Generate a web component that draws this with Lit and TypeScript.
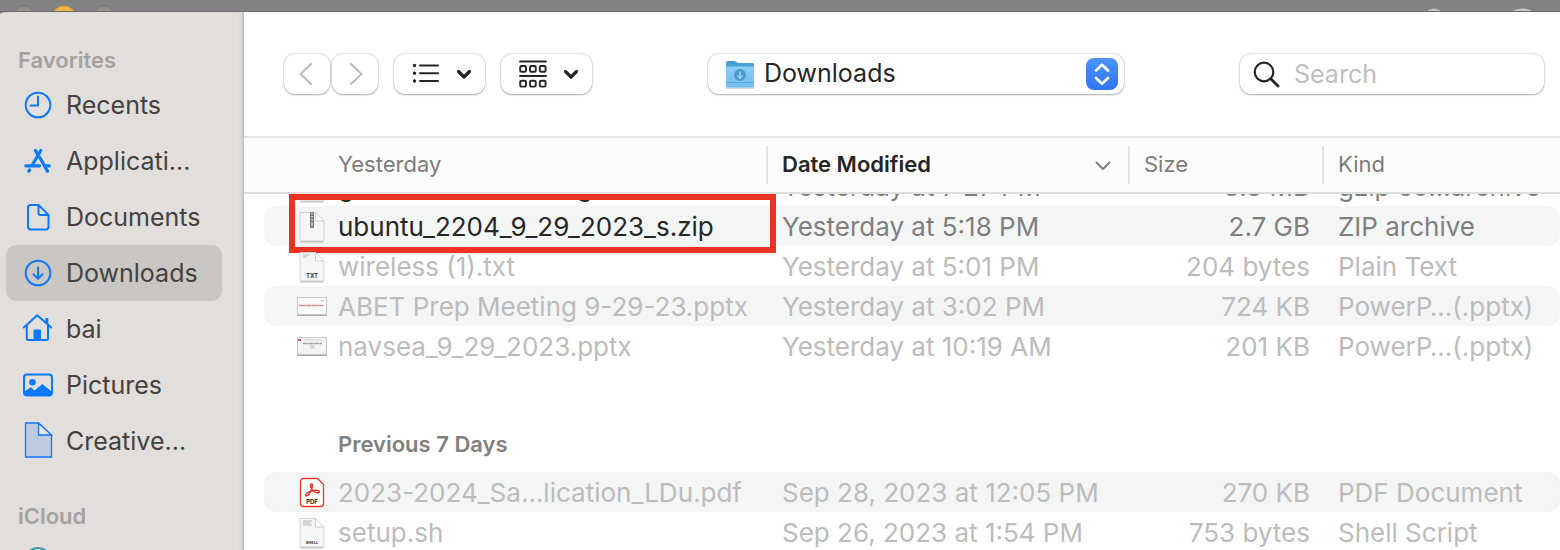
import { LitElement, html, css, svg } from "lit";
import { customElement, property, query } from "lit/decorators.js";
import { classMap } from "lit/directives/class-map.js";

interface FileRow {
  name: string;
  date: string;
  size: string;
  kind: string;
  icon: string;
  enabled?: boolean;
  shaded?: boolean;
  marked?: boolean;
}

const yesterday: FileRow[] = [
  { name: "gtkwave_2.2.117.tar.gz", date: "Yesterday at 7:27 PM", size: "3.3 MB", kind: "gzip co…archive", icon: "zip", enabled: true },
  { name: "ubuntu_2204_9_29_2023_s.zip", date: "Yesterday at 5:18 PM", size: "2.7 GB", kind: "ZIP archive", icon: "zip", enabled: true, shaded: true, marked: true },
  { name: "wireless (1).txt", date: "Yesterday at 5:01 PM", size: "204 bytes", kind: "Plain Text", icon: "txt" },
  { name: "ABET Prep Meeting 9-29-23.pptx", date: "Yesterday at 3:02 PM", size: "724 KB", kind: "PowerP…(.pptx)", icon: "slideRed", shaded: true },
  { name: "navsea_9_29_2023.pptx", date: "Yesterday at 10:19 AM", size: "201 KB", kind: "PowerP…(.pptx)", icon: "slide" },
];

const previousWeek: FileRow[] = [
  { name: "2023-2024_Sa...lication_LDu.pdf", date: "Sep 28, 2023 at 12:05 PM", size: "270 KB", kind: "PDF Document", icon: "pdf", shaded: true },
  { name: "setup.sh", date: "Sep 26, 2023 at 1:54 PM", size: "753 bytes", kind: "Shell Script", icon: "shell" },
];

const page = svg`
  <path d="M4.500 3H19l8 8v20H4.500z" fill="#000" opacity=".25" transform="translate(0 1.500)"/>
  <path d="M4 2.500H19.500L28 11V31H4z" fill="#f6f6f6" stroke="#d2d2d2" stroke-width="1"/>
  <path d="M19.500 2.500V11H28z" fill="#fff" stroke="#cfcfcf" stroke-width="1"/>`;

const fileIcons: Record<string, unknown> = {
  zip: svg`${page}
    <rect x="14" y="2" width="4" height="16" rx="1" fill="#6c7278"/>
    <path d="M16 3v10" stroke="#c4c8cc" stroke-width="2" stroke-dasharray="1.500 1.500"/>
    <rect x="15" y="13" width="2" height="4" fill="#aeb2b6"/>`,
  txt: svg`${page}
    <path d="M7 5h7M7 7h4" stroke="#bbb" stroke-width="1"/>
    <text x="16" y="28" class="tag">TXT</text>`,
  shell: svg`${page}
    <path d="M7 5h9M7 7h8M7 9h9" stroke="#b5b5b5" stroke-width="1"/>
    <text x="16" y="28" class="tag small">SHELL</text>`,
  slideRed: svg`
    <rect x="1" y="9" width="30" height="17" rx="1" fill="#a9a9a9"/>
    <rect x="1.500" y="7.500" width="29" height="17" fill="#fbfbfb" stroke="#c6c6c6" stroke-width="1"/>
    <path d="M3 15.500h24" stroke="#dd8a93" stroke-width="1.600" stroke-dasharray="6 .5"/>
    <path d="M25 10.500h3" stroke="#bbb" stroke-width="1"/>`,
  slide: svg`
    <rect x="1" y="9" width="30" height="17" rx="1" fill="#a9a9a9"/>
    <rect x="1.500" y="7.500" width="29" height="17" fill="#f4f4f4" stroke="#c6c6c6" stroke-width="1"/>
    <rect x="2" y="9" width="3" height="2" fill="#c0506a"/>
    <path d="M8 10h18" stroke="#cfcfcf" stroke-width="1"/>
    <path d="M7 13.500h19" stroke="#a4a4a4" stroke-width="1.500" stroke-dasharray="5 .5"/>
    <path d="M14 16h5M15 18h3" stroke="#b4b4b4" stroke-width="1"/>`,
  pdf: svg`
    <path d="M7 2.500H21.500L27.500 8.500V27.500a3 3 0 0 1-3 3H7.500a3 3 0 0 1-3-3V5.500a3 3 0 0 1 3-3z" fill="#fff" stroke="#e8382b" stroke-width="1.300"/>
    <path d="M15.500 8c-1.800 0-1.300 3.200 1.200 6.200 2 2.500 6.800 3.600 6.800 1.600 0-2.200-6.500-1.700-10 0-3.800 1.700-4.500 3.700-3.200 4 1.800.4 4-3.300 5.200-6.500C16.300 11 17 8 15.500 8z" fill="none" stroke="#e8382b" stroke-width="1.500"/>
    <text x="16" y="28" class="tag pdf">PDF</text>`,
};

const sideIcons: Record<string, unknown> = {
  recents: svg`<circle cx="16" cy="16" r="12.300" class="line"/><path d="M16 7.500V16.500H8.500" class="line"/>`,
  applications: svg`
    <path d="M13.300 5.500L15.500 8.800M18.900 5.500L10.500 19.500M6.800 26.200L7.600 25" class="bold"/>
    <path d="M3.800 20.800H17.500M23 20.800H27.300" class="bold"/>
    <path d="M17.800 12.500L25.500 26.200" class="bold"/>`,
  documents: svg`
    <path d="M8 4H16.500L26.500 14V26a2.500 2.500 0 0 1-2.500 2.500H8.500A2.500 2.500 0 0 1 6 26V6.500A2.500 2.500 0 0 1 8.500 4" class="line"/>
    <path d="M16.500 4V12.500a1.500 1.500 0 0 0 1.500 1.500h8.500" class="line"/>`,
  downloads: svg`<circle cx="16" cy="16" r="12.300" class="line"/><path d="M16 10.500V21.500M11.500 17.300L16 21.700L20.500 17.300" class="line"/>`,
  home: svg`
    <path d="M1.800 14.500L15.200 2.300L29.200 14.500" class="line"/>
    <path d="M4.800 12.500V25.500a1.500 1.500 0 0 0 1.500 1.500H24.500a1.500 1.500 0 0 0 1.500-1.500V12.500" class="line"/>
    <path d="M23.500 5H26.300V12L23.500 9.500z" class="fill"/>
    <path d="M11.500 16.500H19V27H11.500z" class="fill"/>`,
  pictures: svg`
    <rect x="2" y="5.500" width="28" height="21" rx="3" class="line"/>
    <circle cx="10.500" cy="13.300" r="3.300" class="fill"/>
    <path d="M2.500 22.500L8.700 18.300L12.500 21.500L20.300 15L29.500 22.500V25a2 2 0 0 1-2 2H4.500a2 2 0 0 1-2-2z" class="fill"/>`,
  folderDoc: svg`
    <path d="M3.500-2H16.500L29.500 10.500V32H3.500z" fill="#bfcce0" stroke="#0a78ff" stroke-width="1.300"/>
    <path d="M16.500-2V10H29.500z" fill="#e6e5e8" stroke="#0a78ff" stroke-width="1.300"/>`,
  cloud: svg`<circle cx="16" cy="16" r="13" fill="none" stroke="#3e8fa5" stroke-width="2"/>`,
};

const chevron = svg`<path d="M2.500 2.500L8 8L13.500 2.500" fill="none" stroke="#262626" stroke-width="3.200" stroke-linecap="round" stroke-linejoin="round"/>`;

@customElement("finder-sidebar")
class FinderSidebar extends LitElement {
  static styles = css`
    :host {
      display: block;
      width: 244px;
      flex: none;
      box-sizing: border-box;
      padding: 34px 22px 0 6px;
      overflow: hidden;
      background: linear-gradient(to left, #c2bfbc 0 1px, #d9d6d3 2px, #e2dedb 6px);
      border-top-left-radius: 10px 2px;
      color: #434241;
    }
    .heading {
      margin: 0;
      padding-left: 12px;
      font-size: 22px;
      line-height: 28px;
      font-weight: 600;
      color: #a5a19f;
    }
    .items {
      list-style: none;
      margin: 3px 0 33px;
      padding: 0;
    }
    .item {
      display: flex;
      align-items: center;
      gap: 12px;
      height: 56px;
      padding: 0 16px;
      border-radius: 10px;
      color: inherit;
      text-decoration: none;
      font-size: 25px;
    }
    .item.selected {
      background: #cac6c3;
    }
    .icon {
      width: 32px;
      height: 32px;
      flex: none;
      overflow: visible;
    }
    .line {
      fill: none;
      stroke: #0a78ff;
      stroke-width: 2;
      stroke-linecap: round;
      stroke-linejoin: round;
    }
    .bold {
      fill: none;
      stroke: #0a78ff;
      stroke-width: 3.200;
      stroke-linecap: round;
    }
    .fill {
      fill: #0a78ff;
    }
  `;

  private favorites = [
    ["recents", "Recents"],
    ["applications", "Applicati..."],
    ["documents", "Documents"],
    ["downloads", "Downloads"],
    ["home", "bai"],
    ["pictures", "Pictures"],
    ["folderDoc", "Creative..."],
  ];

  render() {
    return html`
      <nav>
        <h2 class="heading">Favorites</h2>
        <ul class="items">
          ${this.favorites.map(
            ([icon, label]) => html`<li>
              <a href="#${icon}" class=${classMap({ item: true, selected: icon === "downloads" })}>
                <svg class="icon" viewBox="0 0 32 32" aria-hidden="true">${sideIcons[icon]}</svg>
                <span>${label}</span>
              </a>
            </li>`
          )}
        </ul>
        <h2 class="heading">iCloud</h2>
        <ul class="items">
          <li>
            <a href="#icloud" class="item" aria-label="iCloud">
              <svg class="icon" viewBox="0 0 32 32" aria-hidden="true">${sideIcons.cloud}</svg>
            </a>
          </li>
        </ul>
      </nav>
    `;
  }
}

@customElement("finder-toolbar")
class FinderToolbar extends LitElement {
  static styles = css`
    :host {
      display: flex;
      justify-content: space-between;
      align-items: center;
      height: 124px;
      flex: none;
      box-sizing: border-box;
      padding: 0 16px 0 40px;
    }
    .group {
      display: flex;
      gap: 16px;
    }
    .pair {
      display: flex;
      gap: 2px;
    }
    .control {
      box-sizing: border-box;
      height: 40px;
      border: 0;
      border-radius: 11px;
      background: #fff;
      box-shadow: 0 0 2px rgba(0, 0, 0, 0.3), 0 1px 2px rgba(0, 0, 0, 0.25);
      padding: 0;
      display: flex;
      align-items: center;
      justify-content: center;
    }
    .nav {
      width: 46px;
    }
    .menu {
      width: 91px;
      gap: 16px;
      padding-left: 5px;
    }
    .place {
      position: relative;
      width: 416px;
    }
    .folder {
      position: absolute;
      left: 16px;
      top: 5px;
      pointer-events: none;
    }
    .stepper {
      position: absolute;
      right: 6px;
      top: 4px;
      pointer-events: none;
    }
    .select {
      appearance: none;
      width: 100%;
      height: 40px;
      border: 0;
      border-radius: 11px;
      background: transparent;
      padding: 0 40px 2px 56px;
      font: inherit;
      font-size: 25px;
      color: #262626;
    }
    .search {
      width: 304px;
      justify-content: flex-start;
      padding: 0 13px;
      gap: 14px;
    }
    .input {
      flex: 1;
      min-width: 0;
      border: 0;
      outline: 0;
      padding: 0;
      background: transparent;
      font: inherit;
      font-size: 25px;
      color: #262626;
    }
    .input::placeholder {
      color: #bfbfbf;
      opacity: 1;
    }
  `;

  render() {
    return html`
      <div class="group">
        <div class="pair">
          <button class="control nav" aria-label="Back">
            <svg width="16" height="24" viewBox="0 0 16 24"><path d="M12 2L1.500 12L12 22" fill="none" stroke="#bdbdbd" stroke-width="2.200" stroke-linecap="round" stroke-linejoin="round"/></svg>
          </button>
          <button class="control nav" aria-label="Forward">
            <svg width="16" height="24" viewBox="0 0 16 24"><path d="M4 2L14.500 12L4 22" fill="none" stroke="#bdbdbd" stroke-width="2.200" stroke-linecap="round" stroke-linejoin="round"/></svg>
          </button>
        </div>
        <button class="control menu" aria-label="List view">
          <svg width="28" height="28" viewBox="0 0 28 28">
            <g stroke="#262626" stroke-width="2" stroke-linecap="round">
              <path d="M8 5.500H26M8 13.200H26M8 21H26"/>
              <path d="M2.500 5.500h.01M2.500 13.200h.01M2.500 21h.01" stroke-width="3.400"/>
            </g>
          </svg>
          <svg width="16" height="11" viewBox="0 0 16 11">${chevron}</svg>
        </button>
        <button class="control menu" aria-label="Group items">
          <svg width="28" height="28" viewBox="0 0 28 28">
            <g fill="none" stroke="#262626" stroke-width="1.900" stroke-linecap="round">
              <path d="M1 1.500H27M1 16H27"/>
              <rect x="1.200" y="6" width="5.800" height="5.800" rx="1.300"/>
              <rect x="11" y="6" width="5.800" height="5.800" rx="1.300"/>
              <rect x="20.800" y="6" width="5.800" height="5.800" rx="1.300"/>
              <rect x="1.200" y="20.800" width="5.800" height="5.800" rx="1.300"/>
              <rect x="11" y="20.800" width="5.800" height="5.800" rx="1.300"/>
              <rect x="20.800" y="20.800" width="5.800" height="5.800" rx="1.300"/>
            </g>
          </svg>
          <svg width="16" height="11" viewBox="0 0 16 11">${chevron}</svg>
        </button>
      </div>
      <div class="control place">
        <svg class="folder" width="32" height="32" viewBox="0 0 32 32" aria-hidden="true">
          <defs>
            <linearGradient id="front" x1="0" y1="0" x2="0" y2="1">
              <stop offset="0" stop-color="#8bcdf5"/><stop offset="1" stop-color="#70bdec"/>
            </linearGradient>
          </defs>
          <path d="M2 28.500H30V29.500H2z" fill="#9fb4c2"/>
          <path d="M2 4a2 2 0 0 1 2-2H10.500L14 4H28.500A1.500 1.500 0 0 1 30 5.500V10H2z" fill="#4a9fd3"/>
          <path d="M2 7.500H30V27a1.500 1.500 0 0 1-1.500 1.500H3.500A1.500 1.500 0 0 1 2 27z" fill="url(#front)"/>
          <path d="M2 23.500H30" stroke="#5aa9da" stroke-width="1"/>
          <circle cx="16" cy="16" r="6" fill="#4d9bcb"/>
          <path d="M16 12.500V19M13.300 16.500L16 19.200L18.700 16.500" fill="none" stroke="#8fd0f5" stroke-width="1.700"/>
        </svg>
        <select class="select" aria-label="Folder">
          <option>Downloads</option>
        </select>
        <svg class="stepper" width="32" height="32" viewBox="0 0 32 32" aria-hidden="true">
          <defs>
            <linearGradient id="blue" x1="0" y1="0" x2="0" y2="1">
              <stop offset="0" stop-color="#4c94fb"/><stop offset="1" stop-color="#2f75f5"/>
            </linearGradient>
          </defs>
          <rect width="32" height="32" rx="8" fill="url(#blue)"/>
          <path d="M10 12.500L16 6.700L22 12.500M10 20L16 25.800L22 20" fill="none" stroke="#fff" stroke-width="2.700" stroke-linecap="round" stroke-linejoin="round"/>
        </svg>
      </div>
      <label class="control search">
        <svg width="27" height="27" viewBox="0 0 27 27" aria-hidden="true">
          <circle cx="11" cy="11" r="9.300" fill="none" stroke="#262626" stroke-width="2.200"/>
          <path d="M17.800 17.800L25 25" stroke="#262626" stroke-width="2.800" stroke-linecap="round"/>
        </svg>
        <input class="input" type="text" placeholder="Search" aria-label="Search" />
      </label>
    `;
  }
}

@customElement("finder-list")
class FinderList extends LitElement {
  static styles = css`
    :host {
      display: block;
      flex: 1;
      min-height: 0;
      border-top: 2px solid #e4e4e4;
    }
    .scroller {
      height: 100%;
      overflow: auto;
      scrollbar-width: none;
    }
    .table {
      width: 100%;
      table-layout: fixed;
      border-collapse: separate;
      border-spacing: 0;
    }
    .date {
      width: 362px;
    }
    .size {
      width: 194px;
    }
    .kind {
      width: 238px;
    }
    .head {
      position: sticky;
      top: 0;
      z-index: 2;
      height: 56px;
      box-sizing: border-box;
      padding: 0;
      background: #fcfcfc;
      border-bottom: 2px solid #dedede;
      font-size: 22px;
      line-height: 34px;
      font-weight: 400;
      text-align: left;
      color: #7c7c7c;
    }
    .head.first {
      padding: 0 0 2px 94px;
    }
    .label {
      display: flex;
      align-items: center;
      justify-content: space-between;
      box-sizing: border-box;
      width: 100%;
      height: 38px;
      border: 0;
      border-left: 2px solid #e2e2e2;
      padding: 0 17px 2px 14px;
      background: none;
      font: inherit;
      color: inherit;
      text-align: left;
    }
    .label.sorted {
      font-weight: 600;
      color: #262626;
    }
    .arrow {
      margin-top: 4px;
    }
    .cell {
      height: 40px;
      box-sizing: border-box;
      padding: 2px 0 0 16px;
      font-size: 26px;
      line-height: 38px;
      white-space: nowrap;
      color: #bcbcbc;
    }
    .enabled .cell {
      color: #7f7f7f;
    }
    .enabled .name {
      color: #262626;
    }
    .shaded .cell {
      background: #f4f5f5;
    }
    .cell.name {
      position: relative;
      padding-left: 32px;
      border-left: 20px solid transparent;
      border-radius: 32px 0 0 32px / 12px 0 0 12px;
      background-clip: padding-box;
    }
    .shaded .cell.last {
      border-radius: 0 12px 12px 0;
    }
    .cell.amount {
      padding-right: 12px;
      text-align: right;
    }
    .file {
      display: flex;
      align-items: center;
      gap: 10px;
    }
    .icon {
      width: 32px;
      height: 34px;
      flex: none;
    }
    .tag {
      font: 700 6px Inter, sans-serif;
      text-anchor: middle;
      fill: #3c3c3c;
    }
    .tag.small {
      font-size: 4px;
    }
    .tag.pdf {
      fill: #222;
    }
    .outline {
      position: absolute;
      inset: -12px -10px -7px 25px;
      border: 6px solid #ec3323;
      pointer-events: none;
    }
    .section {
      height: 106px;
      box-sizing: border-box;
      padding: 50px 0 0 94px;
      vertical-align: top;
      text-align: left;
      font-size: 22px;
      line-height: 56px;
      font-weight: 600;
      color: #808080;
    }
  `;

  @query(".scroller") private scroller!: HTMLElement;

  /** How far the list is scrolled when the panel opens. */
  @property({ type: Number }) offset = 28;

  firstUpdated() {
    this.scroller.scrollTop = this.offset;
  }

  private row(file: FileRow) {
    return html`<tr class=${classMap({ enabled: !!file.enabled, shaded: !!file.shaded })}>
      <td class="cell name">
        <div class="file">
          <svg class="icon" viewBox="0 0 32 34" aria-hidden="true">${fileIcons[file.icon]}</svg>
          <span>${file.name}</span>
        </div>
        ${file.marked ? html`<div class="outline"></div>` : ""}
      </td>
      <td class="cell">${file.date}</td>
      <td class="cell amount">${file.size}</td>
      <td class="cell last">${file.kind}</td>
    </tr>`;
  }

  render() {
    return html`
      <div class="scroller">
        <table class="table">
          <thead>
            <tr>
              <th class="head first">Yesterday</th>
              <th class="head date">
                <button class="label sorted">
                  Date Modified
                  <svg class="arrow" width="16" height="10" viewBox="0 0 16 10" aria-hidden="true"><path d="M1.500 1.500L8 8L14.500 1.500" fill="none" stroke="#7c7c7c" stroke-width="1.900" stroke-linecap="round" stroke-linejoin="round"/></svg>
                </button>
              </th>
              <th class="head size"><button class="label">Size</button></th>
              <th class="head kind"><button class="label">Kind</button></th>
            </tr>
          </thead>
          <tbody>${yesterday.map((file) => this.row(file))}</tbody>
          <tbody>
            <tr><th class="section" colspan="4">Previous 7 Days</th></tr>
            ${previousWeek.map((file) => this.row(file))}
          </tbody>
        </table>
      </div>
    `;
  }
}

@customElement("app-root")
class AppRoot extends LitElement {
  static styles = css`
    :host {
      display: flex;
      flex-direction: column;
      height: 100vh;
      overflow: hidden;
      background: #828284;
      font-family: Inter, "Liberation Sans", sans-serif;
    }
    .backdrop {
      display: flex;
      justify-content: space-between;
      height: 12px;
      flex: none;
      box-sizing: border-box;
      overflow: hidden;
      border-bottom: 1px solid #6c6c6d;
    }
    .panel {
      display: flex;
      flex: 1;
      min-height: 0;
    }
    .main {
      display: flex;
      flex-direction: column;
      flex: 1;
      min-width: 0;
      background: #fff;
    }
  `;

  render() {
    return html`
      <div class="backdrop">
        <svg width="120" height="12" viewBox="0 0 120 12" aria-hidden="true">
          <circle cx="24" cy="18" r="12" fill="#8d8d8e" stroke="#777" stroke-width="1"/>
          <circle cx="64" cy="18" r="12" fill="#f0b840" stroke="#d19e35" stroke-width="1"/>
          <circle cx="104" cy="18" r="12" fill="#8d8d8e" stroke="#777" stroke-width="1"/>
        </svg>
        <svg width="140" height="12" viewBox="0 0 140 12" aria-hidden="true">
          <path d="M8 12V10L14 8.500L20 10V12z" fill="#c4c4c4"/>
          <ellipse cx="102" cy="19" rx="15" ry="10.500" fill="#c4c4c4"/>
        </svg>
      </div>
      <div class="panel">
        <finder-sidebar></finder-sidebar>
        <main class="main">
          <finder-toolbar></finder-toolbar>
          <finder-list></finder-list>
        </main>
      </div>
    `;
  }
}
